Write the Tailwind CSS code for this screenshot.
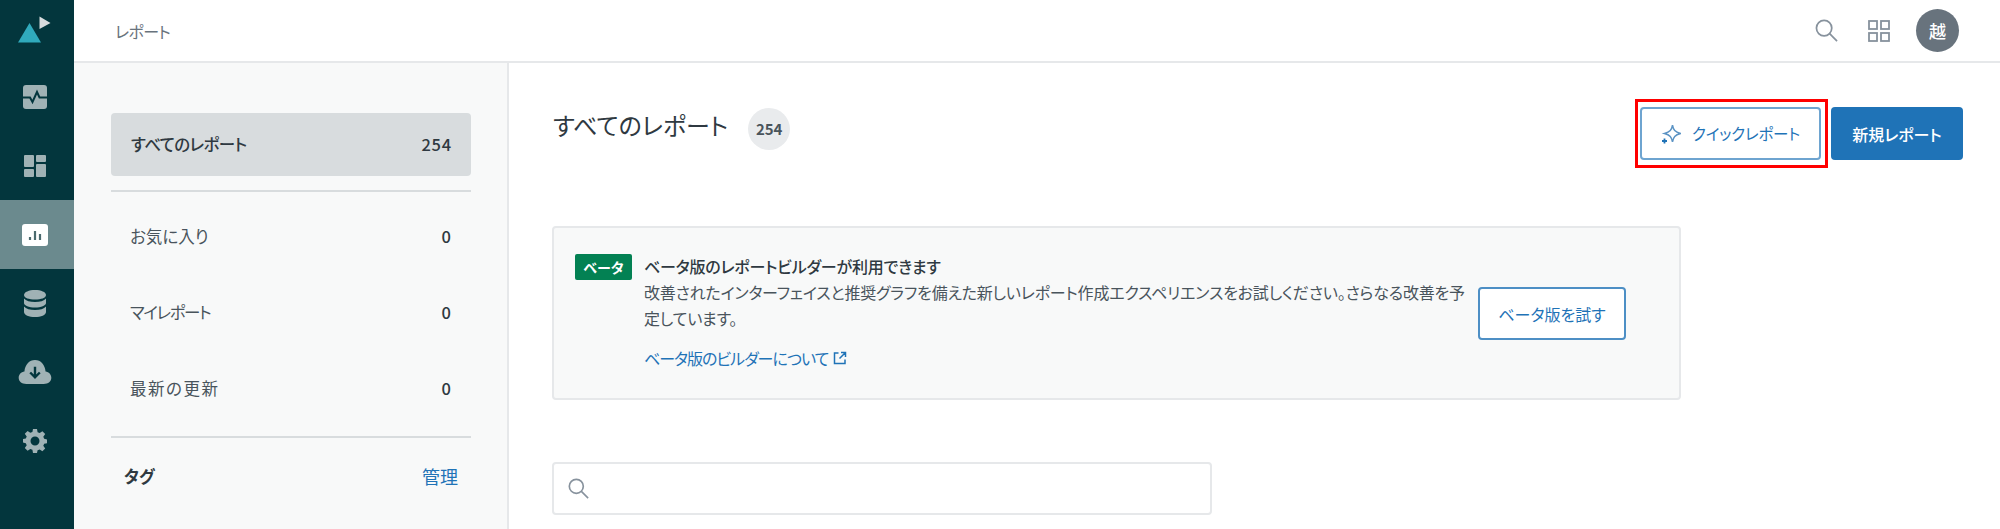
<!DOCTYPE html>
<html lang="ja"><head><meta charset="utf-8"><script src="https://cdn.jsdelivr.net/npm/@tailwindcss/browser@4"></script></head>
<body class="m-0">
<div class="flex w-[2000px] h-[529px] overflow-hidden bg-white text-[#2f3941] [font-family:'Noto_Sans_CJK_JP','Noto_Sans',sans-serif] [font-feature-settings:'palt'] text-[16.5px]">
  <aside class="w-[74px] shrink-0 bg-[#03363d] flex flex-col items-center">
    <div class="h-[62px] w-full flex items-center justify-center pb-[4px] pr-[5px]">
      <svg width="33" height="27" viewBox="0 0 33 27"><path d="M0 26.500 L11.500 7 L23 26.500Z" fill="#30aabc"/><path d="M21.500 0.500 L32.500 7 L21.500 13Z" fill="#d8dcde"/></svg>
    </div>
    <div class="h-[69px] w-full flex items-center justify-center pr-[4px]">
      <svg width="24" height="24" viewBox="0 0 24 24"><rect width="24" height="24" rx="3" fill="#a0b2b5"/><path d="M0 12.500H7L9.500 17L14 7L16.500 12.500H24" fill="none" stroke="#03363d" stroke-width="2"/></svg>
    </div>
    <div class="h-[69px] w-full flex items-center justify-center pr-[4px]">
      <svg width="22" height="22" viewBox="0 0 22 22" fill="#a0b2b5"><rect width="10" height="12" rx="1"/><rect x="12" width="10" height="7" rx="1"/><rect y="14" width="10" height="8" rx="1"/><rect x="12" y="9" width="10" height="13" rx="1"/></svg>
    </div>
    <div class="h-[69px] w-full bg-[#6b8a8e] flex items-center justify-center pr-[4px]">
      <svg width="26" height="22" viewBox="0 0 26 22"><rect width="26" height="22" rx="3" fill="#fff"/><path d="M8 13v3M13 7v9M18 10v6" stroke="#4b6a6e" stroke-width="2.200" fill="none"/></svg>
    </div>
    <div class="h-[68px] w-full flex items-center justify-center pr-[4px]">
      <svg width="22" height="27" viewBox="0 0 22 27" fill="#a0b2b5"><path d="M0 5C0 2 5 0 11 0S22 2 22 5 17 9.500 11 9.500 0 8 0 5Z"/><path d="M0 8.500C2 11 6 12 11 12S20 11 22 8.500V13C22 15.500 17 17.500 11 17.500S0 15.500 0 13Z"/><path d="M0 16.500C2 19 6 20 11 20S20 19 22 16.500V22C22 25 17 27 11 27S0 25 0 22Z"/></svg>
    </div>
    <div class="h-[70px] w-full flex items-center justify-center pr-[4px]">
      <svg width="34" height="24" viewBox="0 0 34 25"><path d="M8 25C3 25 0 22 0 18.500S2.500 12.500 6 12C6.500 5 11 0 17 0S27.500 5 28 12C31.500 12.500 34 15 34 18.500S31 25 26 25Z" fill="#a0b2b5"/><path d="M17 7V17M12 13L17 18L22 13" fill="none" stroke="#03363d" stroke-width="2.500"/></svg>
    </div>
    <div class="h-[68px] w-full flex items-center justify-center pr-[4px]">
      <svg width="24" height="24" viewBox="0 0 24 24" fill="#a0b2b5"><path fill-rule="evenodd" d="M10 0h4l.6 3.200 2.100.9L19.400 2.200l2.800 2.800-1.900 2.700.9 2.100L24 10.400v3.800l-2.800.5-.9 2.100 1.900 2.700-2.800 2.800-2.700-1.900-2.100.9L14 24h-4l-.6-3.200-2.100-.9-2.700 1.900-2.800-2.800 1.900-2.700-.9-2.100L0 13.600V10l2.800-.5.9-2.100L1.800 4.700 4.600 1.900l2.700 1.900 2.100-.9ZM12 7.500a4.500 4.500 0 1 0 0 9 4.500 4.500 0 0 0 0-9Z"/></svg>
    </div>
  </aside>
  <div class="flex-1 flex flex-col min-w-0">
    <header class="h-[63px] shrink-0 border-b-2 border-[#e6e8ea] flex items-center pl-[41px] pr-[41px]">
      <span class="text-[#68737d] text-[16px] tracking-[-0.6px]">レポート</span>
      <svg class="ml-auto" width="23" height="23" viewBox="0 0 24 24" fill="none" stroke="#87929d" stroke-width="1.800"><circle cx="9.500" cy="9.500" r="8"/><path d="M15 15L23 23"/></svg>
      <svg class="ml-[30px]" width="22" height="22" viewBox="0 0 22 22" fill="none" stroke="#87929d" stroke-width="1.800"><rect x="1" y="1" width="8" height="8"/><rect x="13" y="1" width="8" height="8"/><rect x="1" y="13" width="8" height="8"/><rect x="13" y="13" width="8" height="8"/></svg>
      <div class="ml-[26px] w-[43px] h-[43px] rounded-full bg-[#68737d] text-white flex items-center justify-center text-[17px] font-medium">越</div>
    </header>
    <div class="flex-1 flex min-h-0">
      <nav class="w-[435px] shrink-0 bg-[#f8f9f9] border-r-2 border-[#e6e8ea] pt-[50px] pl-[37px] pr-[36px]">
        <div class="h-[63px] rounded bg-[#d8dcde] flex items-center justify-between pl-[20px] pr-[19px] font-medium"><span class="tracking-[-0.6px]">すべてのレポート</span><span class="tracking-[0.8px]">254</span></div>
        <div class="h-[2px] bg-[#d8dcde] mt-[14px] mb-[6px]"></div>
        <div class="h-[76px] flex items-center justify-between pl-[19px] pr-[20px]"><span class="text-[#49545c]">お気に入り</span><span class="font-medium">0</span></div>
        <div class="h-[76px] flex items-center justify-between pl-[19px] pr-[20px]"><span class="text-[#49545c] tracking-[-1.400px]">マイレポート</span><span class="font-medium">0</span></div>
        <div class="h-[76px] flex items-center justify-between pl-[19px] pr-[20px]"><span class="text-[#49545c] tracking-[1.500px]">最新の更新</span><span class="font-medium">0</span></div>
        <div class="h-[2px] bg-[#d8dcde] mt-[10px]"></div>
        <div class="flex items-center justify-between h-[76px] pl-[13px] pr-[13px]"><span class="font-bold">タグ</span><span class="text-[#1f73b7] text-[18px]">管理</span></div>
      </nav>
      <main class="flex-1 min-w-0 pl-[43px] pr-[37px]">
        <div class="flex items-start h-[163px] pt-[36px]">
          <h1 class="ml-[1px] text-[24px] font-normal text-[#2f3941] leading-[36px] mt-[8px]">すべてのレポート</h1>
          <span class="ml-[20px] mt-[9px] w-[42px] h-[42px] rounded-full bg-[#e9ebed] text-[#49545c] flex items-center justify-center text-[15px] font-bold">254</span>
          <div class="ml-auto flex items-start">
            <div class="border-[3px] border-[#f00] pl-[2px] pr-[4px] py-[5px]">
              <button class="w-[181px] h-[53px] rounded border-2 border-[#6ea4d0] text-[#1f73b7] bg-white flex items-center justify-center gap-[11px] text-[15.500px] tracking-[-0.2px]">
                <svg width="20" height="20" viewBox="0 0 20 20" fill="none" stroke="#5b93c4" stroke-width="1.500"><path d="M11.500 1C12.300 6 14 8 19.500 9.500C14 11 12.300 13 11.500 18C10.700 13 9 11 3.500 9.500C9 8 10.700 6 11.500 1Z"/><path d="M3.500 14.500V19.500M1 17H6" stroke="#1f73b7" stroke-width="1.800"/></svg>
                <span>クイックレポート</span>
              </button>
            </div>
            <button class="ml-[3px] mt-[8px] w-[132px] h-[53px] rounded bg-[#1f73b7] text-white font-medium text-[16px]">新規レポート</button>
          </div>
        </div>
        <section class="w-[1129px] h-[174px] rounded border-2 border-[#e6e8ea] bg-[#f8f9f9] flex items-start pl-[21px] pt-[26px]">
          <span class="shrink-0 w-[57px] h-[26px] rounded-[2px] bg-[#038153] text-white font-bold text-[14px] flex items-center justify-center">ベータ</span>
          <div class="ml-[12px] w-[822px] leading-[26px] text-[16px] tracking-[-0.2px] text-[#2f3941] -mt-[1px]">
            <div class="font-medium">ベータ版のレポートビルダーが利用できます</div>
            <div class="text-[#49545c]">改善されたインターフェイスと推奨グラフを備えた新しいレポート作成エクスペリエンスをお試しください。さらなる改善を予定しています。</div>
            <a class="mt-[14px] flex items-center gap-[5px] text-[#1f73b7] tracking-[-1px]">ベータ版のビルダーについて
              <svg width="14" height="14" viewBox="0 0 14 14" fill="none" stroke="#1f73b7" stroke-width="1.500"><path d="M5.500 2H1.500V12.500H12V8.500M8 1.500H12.500V6M12.500 1.500L6.500 7.500"/></svg>
            </a>
          </div>
          <button class="shrink-0 mt-[33px] ml-[12px] w-[148px] h-[53px] rounded border-2 border-[#4d8fc5] bg-white text-[#1f73b7] text-[16px]">ベータ版を試す</button>
        </section>
        <div class="mt-[62px] w-[660px] h-[53px] rounded border-2 border-[#e6e8ea] flex items-center pl-[14px]">
          <svg width="21" height="21" viewBox="0 0 24 24" fill="none" stroke="#87929d" stroke-width="1.900"><circle cx="9.500" cy="9.500" r="8"/><path d="M15 15L23 23"/></svg>
        </div>
      </main>
    </div>
  </div>
</div>
</body></html>
